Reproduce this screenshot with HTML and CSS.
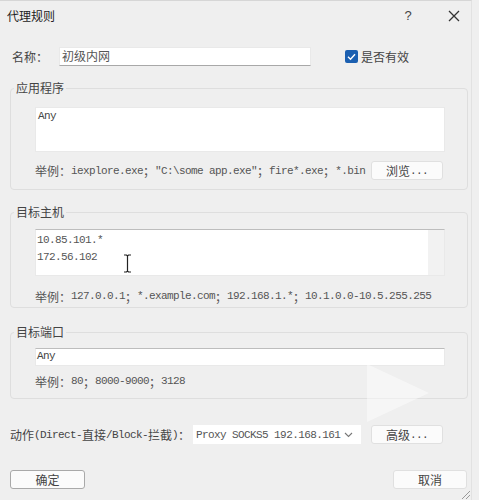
FILE: index.html
```html
<!DOCTYPE html>
<html>
<head>
<meta charset="utf-8">
<link rel="stylesheet" href="styles.css">
</head>
<body>
<div class="dialog">
  <div class="titlebar">
    <span class="title cj">代理规则</span>
    <span class="help">?</span>
    <span class="close"><svg width="12" height="12" viewBox="0 0 12 12"><path d="M1 1L11 11M11 1L1 11" stroke="#333" stroke-width="1.3" fill="none"/></svg></span>
  </div>

  <div class="name-row">
    <span class="lbl cj">名称：</span>
    <div class="field name-input cj">初级内网</div>
    <div class="check">
      <span class="box"><svg width="13" height="13" viewBox="0 0 13 13"><path d="M3 6.8L5.5 9.2L10 4.2" stroke="#fff" stroke-width="1.4" fill="none"/></svg></span>
      <span class="cj check-lbl">是否有效</span>
    </div>
  </div>

  <fieldset class="group g1">
    <legend class="cj">应用程序</legend>
    <div class="field ta1 m">Any</div>
    <div class="ex-row">
      <span class="ex"><span class="cj">举例：</span><span class="m">iexplore.exe</span><span class="cj">；</span><span class="m">"C:\some app.exe"</span><span class="cj">；</span><span class="m">fire*.exe</span><span class="cj">；</span><span class="m">*.bin</span></span>
      <span class="btn"><span class="cj">浏览</span><span class="m">...</span></span>
    </div>
  </fieldset>

  <fieldset class="group g2">
    <legend class="cj">目标主机</legend>
    <div class="field ta2">
      <div class="ta2-text m">10.85.101.*<br>172.56.102</div>
      <div class="scroll"></div>
    </div>
    <div class="ex ex2"><span class="cj">举例：</span><span class="m">127.0.0.1</span><span class="cj">；</span><span class="m">*.example.com</span><span class="cj">；</span><span class="m">192.168.1.*</span><span class="cj">；</span><span class="m">10.1.0.0-10.5.255.255</span></div>
  </fieldset>

  <fieldset class="group g3">
    <legend class="cj">目标端口</legend>
    <div class="field port m">Any</div>
    <div class="ex ex3"><span class="cj">举例：</span><span class="m">80</span><span class="cj">；</span><span class="m">8000-9000</span><span class="cj">；</span><span class="m">3128</span></div>
  </fieldset>

  <div class="action-row">
    <span class="action-lbl"><span class="cj">动作</span><span class="m">(Direct-</span><span class="cj">直接</span><span class="m">/Block-</span><span class="cj">拦截</span><span class="m">)</span><span class="cj">：</span></span>
    <div class="select">
      <span class="m">Proxy SOCKS5 192.168.161</span>
      <svg width="9" height="6" viewBox="0 0 9 6"><path d="M1 1L4.5 4.5L8 1" stroke="#777" stroke-width="1.1" fill="none"/></svg>
    </div>
    <span class="btn"><span class="cj">高级</span><span class="m">...</span></span>
  </div>

  <div class="bottom-row">
    <span class="btn btn-default cj">确定</span>
    <span class="btn btn-cancel cj">取消</span>
  </div>

  <svg class="cursor" width="9" height="19" viewBox="0 0 9 19"><path d="M1 1H3.5L4.5 2L5.5 1H8M4.5 2V17M1 18H3.5L4.5 17L5.5 18H8" stroke="#222" stroke-width="1.2" fill="none"/></svg>
  <svg class="play" width="64" height="60" viewBox="0 0 64 60"><path d="M0 0L62 29L0 58Z" fill="#ffffff" fill-opacity="0.45"/></svg>
  <svg class="grip" width="12" height="12" viewBox="0 0 12 12"><path d="M11 3L3 11M11 7L7 11" stroke="#999" stroke-width="1"/></svg>
</div>
</body>
</html>
```

FILE: styles.css
```css
html, body {
  margin: 0;
  padding: 0;
  background: #efefef;
}
body {
  font-family: "Noto Sans CJK SC", sans-serif;
  font-size: 12px;
  color: #333;
}
.cj {
  font-family: "Noto Sans CJK SC", sans-serif;
  font-size: 12px;
}
.m {
  font-family: "Liberation Mono", "Noto Sans CJK SC", monospace;
  font-size: 11px;
  letter-spacing: -0.6px;
}
.dialog {
  position: relative;
  height: 500px;
  width: 472px;
  overflow: hidden;
  box-sizing: border-box;
  border-top: 1px solid #d6d6d6;
  border-right: 1px solid #e2e2e2;
}
.titlebar {
  height: 29px;
  display: flex;
  align-items: center;
}
.title {
  padding-left: 7px;
  color: #222;
}
.help {
  margin-left: auto;
  width: 12px;
  text-align: center;
  font-family: "Liberation Sans", sans-serif;
  font-size: 13px;
  color: #444;
  margin-right: 30px;
}
.close {
  width: 20px;
  height: 16px;
  display: flex;
  align-items: center;
  justify-content: center;
  margin-right: 7px;
}
.name-row {
  margin-top: 17px;
  height: 19px;
  display: flex;
  align-items: center;
  padding-left: 12px;
}
.lbl {
  width: 47px;
  color: #444;
}
.field {
  background: #fff;
  box-sizing: border-box;
  border: 1px solid #e9e9e9;
}
.name-input {
  width: 252px;
  height: 19px;
  line-height: 16px;
  padding-left: 2px;
  border-bottom-color: #a8a8a8;
  color: #555;
}
.check {
  margin-left: 34px;
  display: flex;
  align-items: center;
}
.box {
  width: 13px;
  height: 13px;
  background: #1b5fb0;
  border-radius: 2px;
  display: flex;
  margin-right: 3px;
}
.check-lbl {
  color: #444;
}
.group {
  margin: 0 0 0 10px;
  width: 458px;
  box-sizing: border-box;
  border: 1px solid #dedede;
  border-radius: 4px;
  padding: 0 22px 9px 24px;
  min-width: 0;
}
.group legend {
  margin-left: -21px;
  padding: 0 2px;
  line-height: 14px;
  color: #444;
}
.g1 { margin-top: 15px; padding-top: 12px; }
.g2 { margin-top: 15px; padding-top: 10px; padding-bottom: 3px; }
.g3 { margin-top: 17px; padding-top: 9px; }
.ta1 {
  height: 45px;
  line-height: 14px;
  padding: 1px 2px;
  color: #444;
}
.ex-row {
  margin-top: 9px;
  height: 19px;
  display: flex;
  align-items: center;
  justify-content: space-between;
  padding-right: 2px;
}
.ex {
  color: #555;
  height: 16px;
  display: flex;
  align-items: center;
  white-space: nowrap;
}
.btn {
  display: flex;
  align-items: center;
  justify-content: center;
  width: 72px;
  height: 19px;
  box-sizing: border-box;
  background: #fbfbfb;
  border: 1px solid #e0e0e0;
  border-radius: 3px;
  color: #444;
}
.ta2 {
  height: 47px;
  display: flex;
  border-top-color: #bdbdbd;
}
.ta2-text {
  flex: 1;
  padding: 2px 1px;
  line-height: 17px;
  color: #555;
}
.scroll {
  width: 16px;
  background: #f2f2f2;
}
.ex2 { margin-top: 12px; }
.port {
  height: 18px;
  line-height: 15px;
  padding-left: 1px;
  border-top-color: #bdbdbd;
  color: #444;
}
.ex3 { margin-top: 7px; }
.action-row {
  margin-top: 26px;
  height: 19px;
  display: flex;
  align-items: center;
  padding-left: 10px;
}
.action-lbl {
  color: #444;
  display: flex;
  align-items: center;
  white-space: nowrap;
}
.select {
  margin-left: 3px;
  width: 168px;
  height: 19px;
  box-sizing: border-box;
  background: #fff;
  display: flex;
  align-items: center;
  justify-content: space-between;
  padding: 0 8px 0 3px;
  color: #555;
}
.action-row .btn {
  margin-left: 10px;
}
.bottom-row {
  margin-top: 26px;
  height: 19px;
  display: flex;
  justify-content: space-between;
  padding: 0 4px 0 10px;
}
.btn-default {
  width: 75px;
  border-color: #a9a9a9;
}
.btn-cancel {
  width: 74px;
}
.cursor {
  position: absolute;
  left: 123px;
  top: 253px;
}
.play {
  position: absolute;
  left: 367px;
  top: 363px;
}
.grip {
  position: absolute;
  right: 0;
  bottom: 0;
}
```
